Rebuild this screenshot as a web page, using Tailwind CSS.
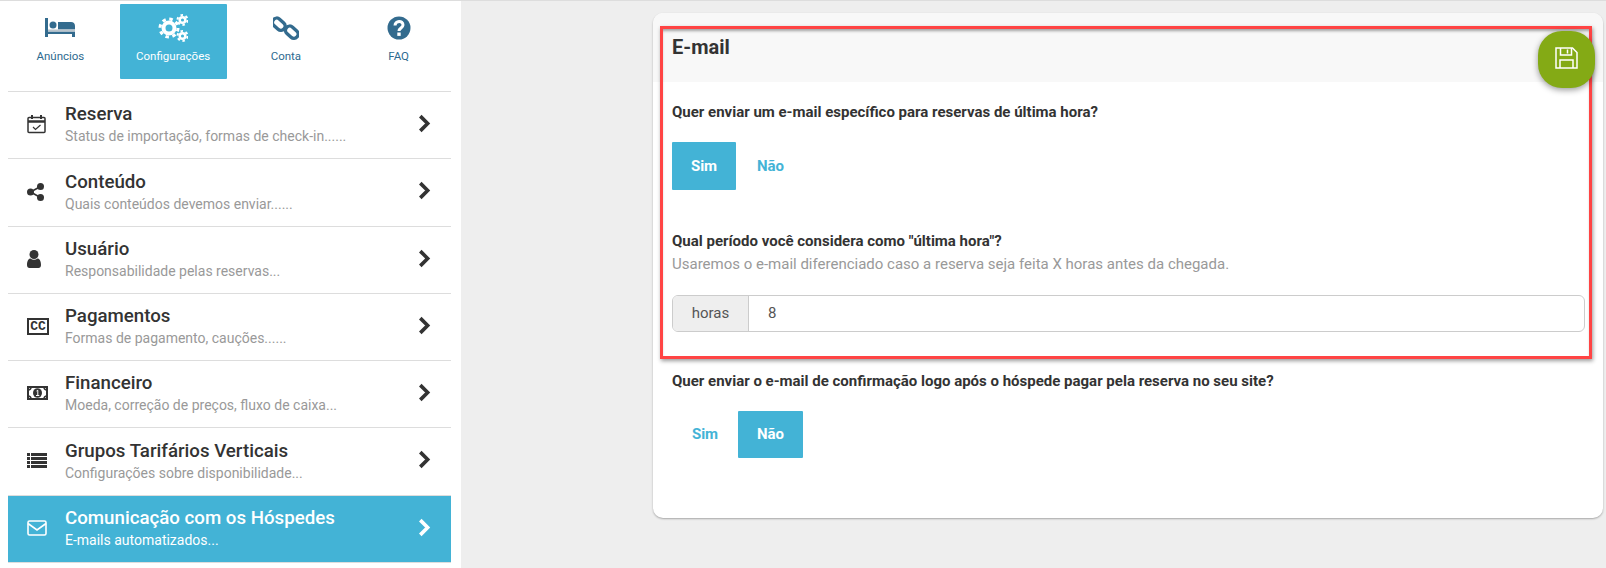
<!DOCTYPE html>
<html lang="pt-BR">
<head>
    <meta charset="UTF-8">
    <title>Comunicação com os Hóspedes</title>
    <script src="https://cdn.jsdelivr.net/npm/@tailwindcss/browser@4"></script>
</head>
<body class="relative h-[568px] w-[1606px] overflow-hidden bg-[#eeeeee] font-['Roboto',sans-serif] text-[#333333]">
<div class="h-px bg-[#dddddd]"></div>
<div class="flex h-[567px]">

    <!-- menu lateral -->
    <aside class="h-full w-[461px] bg-white pt-[3px]">
        <nav class="mx-1 grid h-[87px] w-[451px] grid-cols-4 text-[11.5px] text-[#2d6a8f]">
            <a class="flex h-[75px] flex-col items-center pt-[14px]">
                <svg class="h-[19px] w-[30px]" viewBox="0 0 30 19" fill="#336b8e"><path d="M0 0h3v19H0zM13 4h13c2.500 0 4 1.500 4 4v3.500H13zM3 13.500h27V19h-3v-3H3z"/><rect x="3" y="11.500" width="27" height="2" fill="#b9c4cc"/><circle cx="8" cy="7" r="3.500"/></svg>
                <span class="mt-[11px]">Anúncios</span>
            </a>
            <a class="mx-[3px] flex h-[75px] flex-col items-center rounded-[1px] bg-[#43b3d6] pt-[10px] text-white">
                <svg class="h-[28px] w-[30px]" viewBox="0 0 30 28" fill="none" stroke="#ffffff"><circle cx="11" cy="14" r="5.500" stroke-width="4"/><circle cx="11" cy="14" r="9" stroke-width="3" stroke-dasharray="3.500 3.570"/><circle cx="24.500" cy="6" r="2.800" stroke-width="2.500"/><circle cx="24.500" cy="6" r="5" stroke-width="2" stroke-dasharray="2.500 2.730"/><circle cx="24.500" cy="22" r="2.800" stroke-width="2.500"/><circle cx="24.500" cy="22" r="5" stroke-width="2" stroke-dasharray="2.500 2.730"/></svg>
                <span class="mt-[6px]">Configurações</span>
            </a>
            <a class="flex h-[75px] flex-col items-center pt-[10px]">
                <svg class="h-[28px] w-[26px]" viewBox="0 0 26 26" fill="none" stroke="#336b8e" stroke-width="3.400"><rect x="-1" y="5" width="14" height="8.500" rx="4.200" transform="rotate(42 6 9)"/><rect x="12" y="13" width="14" height="8.500" rx="4.200" transform="rotate(42 19 17)"/></svg>
                <span class="mt-[6px]">Conta</span>
            </a>
            <a class="flex h-[75px] flex-col items-center pt-[12px]">
                <svg class="h-6 w-6" viewBox="0 0 24 24"><circle cx="12" cy="12" r="11.500" fill="#336b8e"/><path d="M8 9.500c0-5 8-5.500 8-.5 0 3-4 3-4 6" fill="none" stroke="#fff" stroke-width="3"/><rect x="10.300" y="16.500" width="3.400" height="3.400" fill="#fff"/></svg>
                <span class="mt-[8px]">FAQ</span>
            </a>
        </nav>

        <div class="mx-2 w-[443px]">
            <a class="flex h-[67px] items-center border-t border-[#dddddd] pr-5">
                <span class="mb-[2px] flex w-[57px] justify-start pl-[19px]">
                    <svg class="h-[20px] w-[19px]" viewBox="0 0 19 20" fill="none" stroke="#333" stroke-width="1.500"><rect x="1" y="3.500" width="17" height="15" rx="1"/><path d="M1 7.500h17" stroke-width="2.500"/><path d="M5 1v4M14 1v4" stroke-width="2"/><path d="M6 13l2.500 2.500L13.500 11" stroke-width="1.200"/></svg>
                </span>
                <span class="flex-1 pb-[3px]">
                    <span class="block text-[18.7px] leading-[25px] font-medium">Reserva</span>
                    <span class="block text-[14px] leading-[18px] text-[#999999]">Status de importação, formas de check-in......</span>
                </span>
                <svg class="mb-1 h-[19px] w-[13px]" viewBox="0 0 12 18" fill="none" stroke="#333" stroke-width="3.400"><path d="M2 2l7 7-7 7"/></svg>
            </a>
            <a class="flex h-[68px] items-center border-t border-[#dddddd] pr-5">
                <span class="mb-[2px] flex w-[57px] justify-start pl-[19px]">
                    <svg class="h-[18px] w-[17px]" viewBox="0 0 17 18" fill="#333"><circle cx="3.500" cy="9" r="3.500"/><circle cx="13.500" cy="3.500" r="3.500"/><circle cx="13.500" cy="14.500" r="3.500"/><path d="M3.500 9l10-5.500M3.500 9l10 5.500" stroke="#333" stroke-width="1.600"/></svg>
                </span>
                <span class="flex-1 pb-[3px]">
                    <span class="block text-[18.7px] leading-[25px] font-medium">Conteúdo</span>
                    <span class="block text-[14px] leading-[18px] text-[#999999]">Quais conteúdos devemos enviar......</span>
                </span>
                <svg class="mb-1 h-[19px] w-[13px]" viewBox="0 0 12 18" fill="none" stroke="#333" stroke-width="3.400"><path d="M2 2l7 7-7 7"/></svg>
            </a>
            <a class="flex h-[67px] items-center border-t border-[#dddddd] pr-5">
                <span class="mb-[2px] flex w-[57px] justify-start pl-[19px]">
                    <svg class="h-[18px] w-[14px]" viewBox="0 0 14 18" fill="#333"><circle cx="7" cy="4.500" r="4.500"/><path d="M0 15c0-4 1.500-6.500 3.500-6.500 1 .8 2.200 1.200 3.500 1.200s2.500-.4 3.500-1.200c2 0 3.500 2.500 3.500 6.500 0 2-1 3-2.500 3h-9C1 18 0 17 0 15z"/></svg>
                </span>
                <span class="flex-1 pb-[3px]">
                    <span class="block text-[18.7px] leading-[25px] font-medium">Usuário</span>
                    <span class="block text-[14px] leading-[18px] text-[#999999]">Responsabilidade pelas reservas...</span>
                </span>
                <svg class="mb-1 h-[19px] w-[13px]" viewBox="0 0 12 18" fill="none" stroke="#333" stroke-width="3.400"><path d="M2 2l7 7-7 7"/></svg>
            </a>
            <a class="flex h-[67px] items-center border-t border-[#dddddd] pr-5">
                <span class="mb-[2px] flex w-[57px] justify-start pl-[19px]">
                    <span class="flex h-[17px] w-[22px] items-center justify-center border-2 border-[#333333] font-['Liberation_Mono',monospace] text-[13px] leading-none font-bold">CC</span>
                </span>
                <span class="flex-1 pb-[3px]">
                    <span class="block text-[18.7px] leading-[25px] font-medium">Pagamentos</span>
                    <span class="block text-[14px] leading-[18px] text-[#999999]">Formas de pagamento, cauções......</span>
                </span>
                <svg class="mb-1 h-[19px] w-[13px]" viewBox="0 0 12 18" fill="none" stroke="#333" stroke-width="3.400"><path d="M2 2l7 7-7 7"/></svg>
            </a>
            <a class="flex h-[67px] items-center border-t border-[#dddddd] pr-5">
                <span class="mb-[2px] flex w-[57px] justify-start pl-[19px]">
                    <svg class="h-[14px] w-[21px]" viewBox="0 0 21 14" fill="none"><rect x="1" y="1" width="19" height="12" stroke="#333" stroke-width="2"/><path d="M1 4a3 3 0 0 0 3-3M17 1a3 3 0 0 0 3 3M1 10a3 3 0 0 1 3 3M20 10a3 3 0 0 0-3 3" stroke="#333" stroke-width="1.500"/><ellipse cx="10.500" cy="7" rx="4.500" ry="4.800" fill="#333"/><path d="M9.500 5l1.300-.7V9.500M9 9.500h3.300" stroke="#fff"/></svg>
                </span>
                <span class="flex-1 pb-[3px]">
                    <span class="block text-[18.7px] leading-[25px] font-medium">Financeiro</span>
                    <span class="block text-[14px] leading-[18px] text-[#999999]">Moeda, correção de preços, fluxo de caixa...</span>
                </span>
                <svg class="mb-1 h-[19px] w-[13px]" viewBox="0 0 12 18" fill="none" stroke="#333" stroke-width="3.400"><path d="M2 2l7 7-7 7"/></svg>
            </a>
            <a class="flex h-[68px] items-center border-t border-[#dddddd] pr-5">
                <span class="mb-[2px] flex w-[57px] justify-start pl-[19px]">
                    <svg class="h-[15px] w-[20px]" viewBox="0 0 20 15" fill="#333"><path d="M0 0h3v3H0zM4 0h16v3H4zM0 4h3v3H0zM4 4h16v3H4zM0 8h3v3H0zM4 8h16v3H4zM0 12h3v3H0zM4 12h16v3H4z"/></svg>
                </span>
                <span class="flex-1 pb-[3px]">
                    <span class="block text-[18.7px] leading-[25px] font-medium">Grupos Tarifários Verticais</span>
                    <span class="block text-[14px] leading-[18px] text-[#999999]">Configurações sobre disponibilidade...</span>
                </span>
                <svg class="mb-1 h-[19px] w-[13px]" viewBox="0 0 12 18" fill="none" stroke="#333" stroke-width="3.400"><path d="M2 2l7 7-7 7"/></svg>
            </a>
            <a class="flex h-[68px] items-center border-y border-[#dddddd] bg-[#43b3d6] pr-5 text-white">
                <span class="mb-[2px] flex w-[57px] justify-start pl-[19px]">
                    <svg class="h-[16px] w-[20px]" viewBox="0 0 20 16" fill="none" stroke="#fff" stroke-width="1.600"><rect x="1" y="1" width="18" height="14" rx="1.500"/><path d="M1 3.500l9 6.500 9-6.500"/></svg>
                </span>
                <span class="flex-1 pb-[3px]">
                    <span class="block text-[18.7px] leading-[25px] font-medium">Comunicação com os Hóspedes</span>
                    <span class="block text-[14px] leading-[18px]">E-mails automatizados...</span>
                </span>
                <svg class="mb-1 h-[19px] w-[13px]" viewBox="0 0 12 18" fill="none" stroke="#fff" stroke-width="3.400"><path d="M2 2l7 7-7 7"/></svg>
            </a>
        </div>
    </aside>

    <!-- painel de configuracao -->
    <main class="flex-1 pt-3 pl-[192px]">
        <section class="h-[505px] w-[950px] overflow-hidden rounded-[10px] bg-white shadow-[0_1px_2px_rgba(0,0,0,0.3)]">
            <header class="h-[69px] bg-[#f8f8f8] px-[19px] pt-[21px]">
                <h2 class="text-[20px] leading-[26px] font-bold text-[#333333]">E-mail</h2>
            </header>
            <div class="px-[19px]">
                <p class="mt-5 text-[15px] leading-5 font-bold">Quer enviar um e-mail específico para reservas de última hora?</p>
                <div class="mt-5 flex text-[15px] font-bold">
                    <button class="h-[48px] w-[64px] rounded-[1px] bg-[#43b3d6] text-white">Sim</button>
                    <button class="h-[48px] w-[69px] text-[#43b3d6]">Não</button>
                </div>
                <p class="mt-[41px] text-[15px] leading-5 font-bold">Qual período você considera como "última hora"?</p>
                <p class="mt-[3px] text-[15px] leading-5 text-[#999999]">Usaremos o e-mail diferenciado caso a reserva seja feita X horas antes da chegada.</p>
                <div class="mt-[21px] flex h-[37px] w-[913px] overflow-hidden rounded-[6px] border border-[#cccccc] text-[15px]">
                    <span class="flex w-[76px] items-center justify-center border-r border-[#cccccc] bg-[#eeeeee] text-[#555555]">horas</span>
                    <span class="flex flex-1 items-center pl-[19px] text-[#555555]">8</span>
                </div>
                <p class="mt-[39px] text-[15px] leading-5 font-bold">Quer enviar o e-mail de confirmação logo após o hóspede pagar pela reserva no seu site?</p>
                <div class="mt-5 flex text-[15px] font-bold">
                    <button class="h-[47px] w-[66px] text-[#43b3d6]">Sim</button>
                    <button class="h-[47px] w-[65px] rounded-[1px] bg-[#43b3d6] text-white">Não</button>
                </div>
            </div>
        </section>
    </main>
</div>

<!-- destaque vermelho e botao salvar ficam por cima do painel -->
<div class="absolute top-[26px] left-[660px] h-[333px] w-[932px] border-[3px] border-[#ff4444] shadow-[1px_2px_4px_rgba(0,0,0,0.4),inset_0_3px_3px_-1px_rgba(0,0,0,0.35)]"></div>
<button class="absolute top-[31px] left-[1538px] flex h-[57px] w-[57px] items-center justify-center rounded-[24px] bg-[#84aa15] pb-1 shadow-[0_2px_6px_rgba(0,0,0,0.4)]">
    <svg class="h-[22px] w-[23px]" viewBox="0 0 23 22" fill="none" stroke="#ffffff" stroke-width="1.500"><path d="M1 1h16.500L22 5.500V21H1z"/><path d="M5.500 1v7h11V1M12.500 2.500v4" /><path d="M5 21v-8h13v8"/></svg>
</button>
</body>
</html>
